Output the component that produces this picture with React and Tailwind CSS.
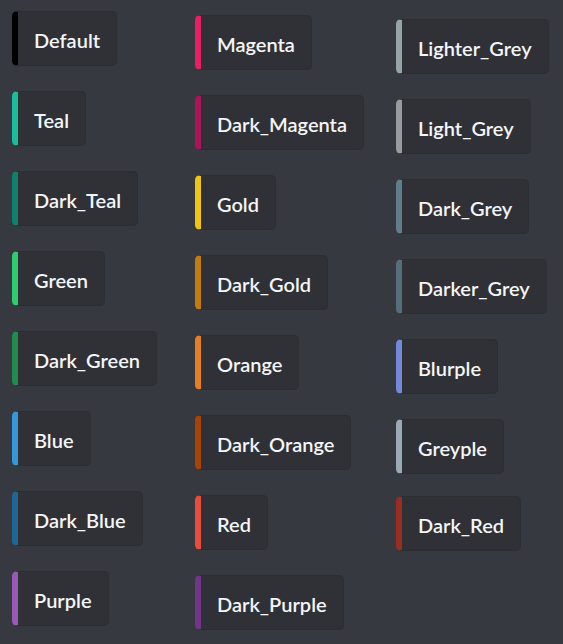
import React from "react";

const col1 = [
  ["Default", "border-l-[#000000]"],
  ["Teal", "border-l-[#1abc9c]"],
  ["Dark_Teal", "border-l-[#11806a]"],
  ["Green", "border-l-[#2ecc71]"],
  ["Dark_Green", "border-l-[#1f8b4c]"],
  ["Blue", "border-l-[#3498db]"],
  ["Dark_Blue", "border-l-[#206694]"],
  ["Purple", "border-l-[#9b59b6]"],
];
const col2 = [
  ["Magenta", "border-l-[#e91e63]"],
  ["Dark_Magenta", "border-l-[#ad1457]"],
  ["Gold", "border-l-[#f1c40f]"],
  ["Dark_Gold", "border-l-[#c27c0e]"],
  ["Orange", "border-l-[#e67e22]"],
  ["Dark_Orange", "border-l-[#a84300]"],
  ["Red", "border-l-[#e74c3c]"],
  ["Dark_Purple", "border-l-[#71368a]"],
];
const col3 = [
  ["Lighter_Grey", "border-l-[#95a5a6]"],
  ["Light_Grey", "border-l-[#979c9f]"],
  ["Dark_Grey", "border-l-[#607d8b]"],
  ["Darker_Grey", "border-l-[#546e7a]"],
  ["Blurple", "border-l-[#7289da]"],
  ["Greyple", "border-l-[#99aab5]"],
  ["Dark_Red", "border-l-[#992d22]"],
];

function Chip({ name, cls, extra = "" }) {
  return (
    <div
      className={`flex h-[55px] w-fit items-center rounded-[5px] border border-[#2c2e33] border-l-[6px] bg-[#2f3136] pl-[16px] pr-[16px] pt-[3px] text-[20px] font-semibold text-[#f4f5f6] ${cls} ${extra}`}
    >
      {name}
    </div>
  );
}

export default function App() {
  return (
    <div
      className="flex h-[644px] w-[563px] overflow-hidden bg-[#36393f]"
      style={{ fontFamily: "Lato, 'Noto Sans', sans-serif" }}
    >
      <div className="ml-[12px] mt-[11px] flex w-[183px] flex-col gap-[25px]">
        {col1.map(([n, c]) => (
          <Chip key={n} name={n} cls={c} />
        ))}
      </div>
      <div className="mt-[15px] flex w-[201px] flex-col gap-[25px]">
        {col2.map(([n, c]) => (
          <Chip key={n} name={n} cls={c} />
        ))}
      </div>
      <div className="mt-[19px] flex flex-col gap-[25px]">
        {col3.map(([n, c]) => (
          <Chip key={n} name={n} cls={c} extra={n === "Dark_Red" ? "-mt-[3px]" : ""} />
        ))}
      </div>
    </div>
  );
}
